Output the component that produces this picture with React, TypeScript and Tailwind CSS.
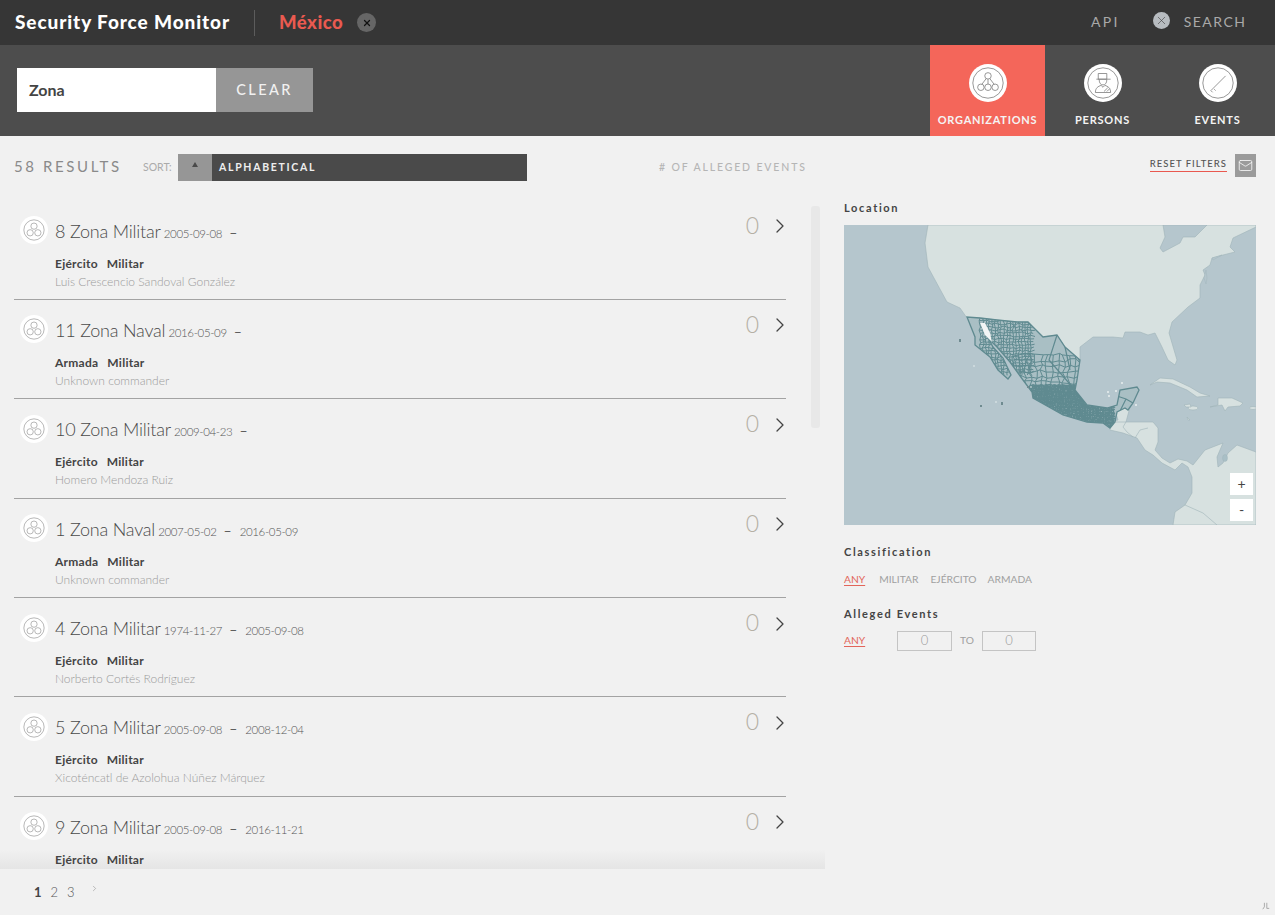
import React from 'react';
import { ChevronRight, X, Mail } from 'lucide-react';

const rows = [
  { name: '8 Zona Militar', start: '2005-09-08', end: '', branch: 'Ejército', cls: 'Militar', cmd: 'Luis Crescencio Sandoval González' },
  { name: '11 Zona Naval', start: '2016-05-09', end: '', branch: 'Armada', cls: 'Militar', cmd: 'Unknown commander' },
  { name: '10 Zona Militar', start: '2009-04-23', end: '', branch: 'Ejército', cls: 'Militar', cmd: 'Homero Mendoza Ruiz' },
  { name: '1 Zona Naval', start: '2007-05-02', end: '2016-05-09', branch: 'Armada', cls: 'Militar', cmd: 'Unknown commander' },
  { name: '4 Zona Militar', start: '1974-11-27', end: '2005-09-08', branch: 'Ejército', cls: 'Militar', cmd: 'Norberto Cortés Rodríguez' },
  { name: '5 Zona Militar', start: '2005-09-08', end: '2008-12-04', branch: 'Ejército', cls: 'Militar', cmd: 'Xicoténcatl de Azolohua Núñez Márquez' },
  { name: '9 Zona Militar', start: '2005-09-08', end: '2016-11-21', branch: 'Ejército', cls: 'Militar', cmd: '' },
];

// jittered grid, used for the municipal borders on the map
const mesh = (x0: number, y0: number, x1: number, y1: number, step: number) => {
  const jitter = (a: number, b: number) => {
    const v = Math.sin(a * 12.9898 + b * 78.233) * 43758.5453;
    return (v - Math.floor(v) - 0.5) * step * 0.7;
  };
  let d = '';
  for (let x = x0; x < x1; x += step) {
    for (let y = y0; y < y1; y += step) {
      const p = `${(x + jitter(x, y)).toFixed(1)} ${(y + jitter(y, x)).toFixed(1)}`;
      d += `M${p}L${(x + step + jitter(x + step, y)).toFixed(1)} ${(y + jitter(y, x + step)).toFixed(1)}`;
      d += `M${p}L${(x + jitter(x, y + step)).toFixed(1)} ${(y + step + jitter(y + step, x)).toFixed(1)}`;
    }
  }
  return d;
};

const mexico =
  'M123 92L131 112L131 120L146 132L154 145L164 154L167 150L159 133L149 122L136 98L146 115L153 122L166 137L179 155L188 167L189 173L219 190L243 197L259 198L266 203L271 197L273 187L281 183L284 185L289 178L295 165L293 162L276 165L273 180L263 183L243 180L231 165L233 155L236 135L221 122L213 110L199 112L184 97L173 97L153 95L136 93Z';

const OrgGlyph = () => (
  <g fill="none">
    <circle cx="20" cy="12.5" r="3.4" />
    <circle cx="12.5" cy="24.5" r="3.4" />
    <circle cx="20" cy="24.5" r="3.4" />
    <circle cx="27.5" cy="24.5" r="3.4" />
    <path d="M18 15.5L13.500 21.400M20 16v5M22 15.500l4.500 5.900" />
  </g>
);

const PersonGlyph = () => (
  <g fill="none">
    <path d="M15 10h9v6h-9zM13 16h15M16 16.500c0 3.500 1.500 5.500 4 5.500s4-2 4-5.500" />
    <path d="M12 30c0-5 3-6.500 6-7.500l2 2 2-2c3 1 6 2.500 6 7.500zM21 29l4-4M24 29l3-3" />
  </g>
);

const EventGlyph = () => (
  <g fill="none">
    <path d="M12.500 28L28 12.500M12.500 28l1.800 1.800M16 26.500l1.500 1.500" />
  </g>
);

const TabIcon = ({ children }: { children: React.ReactNode }) => (
  <svg viewBox="0 0 40 40" className="w-[38px] h-[38px]" stroke="#777" strokeWidth="0.8">
    <circle cx="20" cy="20" r="20" fill="#fff" stroke="none" />
    <circle cx="20" cy="20" r="16" fill="none" />
    {children}
  </svg>
);

const Tab = ({ label, active, children }: { label: string; active?: boolean; children: React.ReactNode }) => (
  <div className={`w-[115px] h-full flex flex-col items-center pt-[19px] ${active ? 'bg-[#f4665a]' : ''}`}>
    <TabIcon>{children}</TabIcon>
    <div className="mt-[11px] text-[11px] leading-[14px] font-bold tracking-[0.75px] text-[#f4f4f4]">{label}</div>
  </div>
);

const OrgBadge = () => (
  <svg viewBox="0 0 40 40" className="w-[28px] h-[28px] shrink-0" stroke="#999" strokeWidth="1">
    <circle cx="20" cy="20" r="20" fill="#fff" stroke="none" />
    <circle cx="20" cy="20" r="14.500" fill="none" />
    <g fill="none">
      <circle cx="20" cy="14.500" r="4.500" />
      <circle cx="14.500" cy="24" r="4.500" />
      <circle cx="25.500" cy="24" r="4.500" />
    </g>
  </svg>
);

const Row = ({ row }: { row: (typeof rows)[number] }) => (
  <div className="relative h-[99.4px] box-border border-b border-[#a3a3a3] shrink-0">
    <div className="absolute left-[6px] top-[15.500px]"><OrgBadge /></div>
    <div className="pl-[41px] pt-[18px]">
      <div className="flex items-baseline h-[24px] text-[#4a4a4a]">
        <span className="text-[18px] leading-[24px] font-light tracking-[-0.2px]">{row.name}</span>
        <span className="ml-[3px] text-[11.500px] font-light text-[#555] tracking-[-0.35px]">{row.start}</span>
        <span className="ml-[7px] text-[14px] text-[#555]">–</span>
        {row.end && <span className="ml-[8px] text-[11.500px] font-light text-[#555] tracking-[-0.35px]">{row.end}</span>}
      </div>
      <div className="mt-[14px] text-[12px] leading-[14px] font-bold text-[#444] flex gap-[9px] tracking-[0.25px]">
        <span>{row.branch}</span><span>{row.cls}</span>
      </div>
      {row.cmd && <div className="mt-[4px] text-[12px] leading-[14px] font-light text-[#9b9b9b]">{row.cmd}</div>}
    </div>
    <div className="absolute right-[27px] top-[10px] text-[23px] leading-[28px] font-light text-[#b5b0a5]">0</div>
    <ChevronRight className="absolute right-[-5.500px] top-[13.500px] w-[24px] h-[24px] text-[#444]" strokeWidth={1.3} />
  </div>
);

const seaStroke = '#9fb4b8';

const LocationMap = () => (
  <svg viewBox="0 0 412 300" className="block w-[412px] h-[300px] bg-[#b5c6cd]">
    <defs>
      <clipPath id="mx">
        <path d={mexico} />
      </clipPath>
    </defs>
    <g fill="#d7e1e0" stroke={seaStroke} strokeWidth="0.6">
      <path d="M84 0L81 18L84 42L103 77L116 83L123 93L136 93L153 95L173 97L184 97L199 112L213 110L221 122L236 135L236 122L249 112L269 112L279 113L281 107L296 107L304 110L311 108L318 122L324 135L331 140L333 135L325 108L328 97L344 82L356 73L356 60L361 50L359 45L366 40L368 33L379 30L391 27L386 22L389 13L412 2L412 0Z" />
      <path d="M266 205L266 197L274 195L271 185L286 182L282 197L296 197L309 197L314 203L314 217L311 225L318 233L326 238L334 234L343 236L349 240L361 225L379 218L373 232L374 242L379 238L384 228L393 220L412 227L412 300L329 300L331 287L341 280L348 268L348 252L344 242L338 238L331 245L318 238L309 230L301 225L293 213L279 208Z" />
      <path d="M306 160L316 153L329 154L346 162L356 168L366 171L353 172L343 165L326 158L313 157Z" />
      <path d="M366 182L374 180L374 173L388 173L399 178L396 181L384 182L381 186L378 180Z" />
      <ellipse cx="349" cy="183" rx="5" ry="2" />
      <ellipse cx="409" cy="183" rx="3.500" ry="1.500" />
      <path d="M341 280L359 288L373 300M279 202L283 207L289 212M291 213L296 205L304 203M282 197L279 202M266 197L282 197" fill="none" />
      <path d="M340 180l6 -1l1 3l-5 0zM343 192l3 3l-2 0z" />
    </g>
    <path d="M319 0L321 12L316 23L319 27L336 18L339 12L351 12L363 0Z" fill="#b5c6cd" stroke={seaStroke} strokeWidth="0.6" />
    <path d="M362 45l-2 8l2 6l1 -6zM368 33l10 -3l-9 5z" fill="#b5c6cd" stroke={seaStroke} strokeWidth="0.4" />
    <ellipse cx="381" cy="233" rx="2.500" ry="3.500" fill="#a9bfc6" stroke={seaStroke} strokeWidth="0.4" />

    <path d={mexico} fill="#a9bfc4" />
    <g clipPath="url(#mx)" fill="none" stroke="#5f8a90">
      <path d={mesh(136, 93, 190, 150, 3)} strokeWidth="1" />
      <path d={mesh(170, 130, 240, 175, 5.5)} strokeWidth="1" />
      <path d={mesh(186, 160, 270, 205, 1.6)} strokeWidth="1.3" />
      <path d="M270 170L282 174L289 178M282 174L276 186M213 110L205 135L218 150L231 165M221 122L226 145" strokeWidth="1.2" />
    </g>
    <path d={mexico} fill="none" stroke="#5f8a90" strokeWidth="1.3" />
    <path d="M136 98L141 98L146 108L148 117L141 110Z" fill="#f2f5f5" />
    <g fill="#e8eeee">
      <circle cx="130" cy="141" r="0.8" /><circle cx="152" cy="177" r="0.8" /><circle cx="272" cy="166" r="1" /><circle cx="278" cy="158" r="1" /><circle cx="264" cy="167" r="1" /><circle cx="265" cy="171" r="1" /><circle cx="292" cy="180" r="1" /><circle cx="187" cy="162" r="0.8" />
    </g>
    <g fill="#6f8b90">
      <rect x="115" y="114" width="2" height="3" /><rect x="136" y="180" width="2" height="2" /><rect x="157" y="177" width="2" height="3" /><rect x="183" y="161" width="2" height="2" />
    </g>
  </svg>
);

const Label = ({ children }: { children: React.ReactNode }) => (
  <div className="text-[11px] leading-[14px] font-bold tracking-[1.65px] text-[#444]">{children}</div>
);

const RangeBox = ({ w }: { w: string }) => (
  <div className={`${w} h-[20px] border border-[#c4c4c4] text-center text-[13px] leading-[17px] font-light text-[#999]`}>0</div>
);

export default function App() {
  return (
    <div className="relative h-[915px] w-full overflow-hidden bg-[#f1f1f1] font-['Lato','Noto_Sans',sans-serif]">
      <header className="h-[45px] bg-[#363636] flex items-center pl-[15px] pr-[28.500px]">
        <div className="text-[19px] font-black tracking-[0.9px] text-white w-[239px] whitespace-nowrap">Security Force Monitor</div>
        <div className="w-px h-[26px] bg-[#5c5c5c]" />
        <div className="ml-[24px] text-[18.500px] font-black tracking-[0.5px] text-[#ea5a50]">México</div>
        <div className="ml-[14px] w-[19px] h-[19px] rounded-full bg-[#666] flex items-center justify-center">
          <X className="w-[10px] h-[10px] text-[#111]" strokeWidth={3} />
        </div>
        <div className="ml-auto mb-[2px] text-[14px] tracking-[2.3px] text-[#a9a9a9]">API</div>
        <div className="ml-[33px] mb-[4px] w-[17px] h-[17px] rounded-full bg-[#b7bcc0] flex items-center justify-center">
          <X className="w-[13px] h-[13px] text-[#444]" strokeWidth={1.2} />
        </div>
        <div className="ml-[14px] mb-[2px] text-[14px] tracking-[1.5px] text-[#a9a9a9]">SEARCH</div>
      </header>

      <div className="h-[91px] bg-[#4d4d4d] flex items-start pl-[17px]">
        <div className="mt-[23px] h-[44px] w-[199px] bg-white pl-[12px] flex items-center text-[16px] font-bold text-[#444]">Zona</div>
        <div className="mt-[23px] h-[44px] w-[97px] bg-[#969696] flex items-center justify-center text-[14.500px] tracking-[2.4px] font-medium text-[#f1f1f1]">CLEAR</div>
        <div className="ml-auto flex h-full">
          <Tab label="ORGANIZATIONS" active><OrgGlyph /></Tab>
          <Tab label="PERSONS"><PersonGlyph /></Tab>
          <Tab label="EVENTS"><EventGlyph /></Tab>
        </div>
      </div>

      <div className="h-[64.500px] flex items-start pl-[14px] pr-[19px] pt-[18px]">
        <div className="w-[129px] h-[25px] flex items-center text-[15px] tracking-[2.6px] text-[#8a8a8a]">58 RESULTS</div>
        <div className="w-[35px] h-[27px] flex items-center text-[10.500px] text-[#aaa]">SORT:</div>
        <div className="w-[34px] h-[27px] bg-[#969696] flex justify-center pt-[8px]">
          <div className="w-0 h-0 border-x-[3.500px] border-x-transparent border-b-[5px] border-b-[#4a4a4a]" />
        </div>
        <div className="w-[315px] h-[27px] bg-[#4a4a4a] pl-[7px] flex items-center text-[10.500px] font-bold tracking-[1.7px] text-[#eee]">ALPHABETICAL</div>
        <div className="ml-[132px] h-[27px] flex items-center text-[10.500px] font-medium tracking-[1.85px] text-[#b5b5b5]"># OF ALLEGED EVENTS</div>
        <div className="ml-auto h-[17px] mt-[1px] pt-[3px] border-b border-[#e9584f] flex items-center text-[9.500px] font-medium tracking-[1px] text-[#555]">RESET FILTERS</div>
        <div className="ml-[8px] w-[21px] h-[23px] bg-[#9b9b9b] flex items-center justify-center">
          <Mail className="w-[15px] h-[15px] text-[#f4f4f4]" strokeWidth={1.4} />
        </div>
      </div>

      <div className="flex h-[714.500px]">
        <div className="w-[825px] shrink-0 flex flex-col">
          <div className="relative h-[668.500px] overflow-hidden pl-[14px] pr-[39px]">
            <div className="absolute inset-x-0 bottom-0 h-[20px] bg-gradient-to-b from-transparent to-[#e5e5e5]" />
            <div className="relative flex flex-col">
              {rows.map((row) => <Row key={row.name} row={row} />)}
            </div>
            <div className="absolute right-[5px] top-[5px] w-[9px] h-[222px] rounded-[3px] bg-[#e8e8e8]" />
          </div>
          <div className="flex items-start pl-[34px] pt-[14px] text-[13px] leading-[18px] text-[#555] font-light">
            <span className="font-bold text-[#444]">1</span>
            <span className="ml-[9px]">2</span>
            <span className="ml-[9px]">3</span>
            <ChevronRight className="ml-[15px] w-[9px] h-[11px] text-[#777]" strokeWidth={1.2} />
          </div>
        </div>

        <div className="flex-1 pl-[19px] pr-[19px] pt-0">
          <Label>Location</Label>
          <div className="relative mt-[10px] h-[300px]">
            <LocationMap />
            <div className="absolute right-[3px] top-[248px] w-[23px] h-[22px] bg-white flex items-center justify-center text-[14px] leading-none text-[#444]">+</div>
            <div className="absolute right-[3px] top-[274px] w-[23px] h-[22px] bg-white flex items-center justify-center text-[14px] leading-none text-[#444]">-</div>
          </div>
          <div className="mt-[20px]"><Label>Classification</Label></div>
          <div className="mt-[13px] flex items-center gap-[14px] text-[10.250px] leading-[14px] text-[#a0a0a0]">
            <span className="text-[#e2655a] underline underline-offset-2">ANY</span>
            <span>MILITAR</span>
            <span className="-ml-[2px]">EJÉRCITO</span>
            <span className="-ml-[3px]">ARMADA</span>
          </div>
          <div className="mt-[21px]"><Label>Alleged Events</Label></div>
          <div className="mt-[10px] flex items-center text-[10.250px] text-[#a0a0a0]">
            <span className="w-[53px] text-[#e2655a] underline underline-offset-2">ANY</span>
            <RangeBox w="w-[55px]" />
            <span className="w-[30px] text-center">TO</span>
            <RangeBox w="w-[54px]" />
          </div>
        </div>
      </div>

      <svg viewBox="0 0 10 10" className="absolute right-[5px] bottom-[5px] w-[8px] h-[8px]" fill="none" stroke="#999" strokeWidth="1">
        <path d="M3 1v5l-2 3M6 1v7h3" />
      </svg>
    </div>
  );
}
